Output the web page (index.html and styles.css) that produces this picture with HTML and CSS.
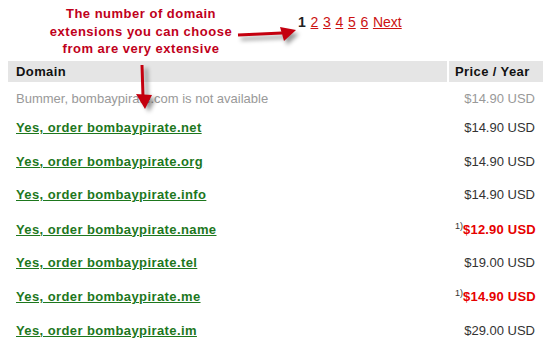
FILE: index.html
```html
<!DOCTYPE html>
<html lang="en">
<head>
    <meta charset="UTF-8">
    <title>Domain Search Results</title>
    <link rel="stylesheet" href="styles.css">
</head>
<body>
    <div class="page">
        <div class="top">
            <p class="callout">The number of domain<br>extensions you can choose<br>from are very extensive</p>
            <div class="pager">
                <span class="current">1</span>
                <a href="#">2</a>
                <a href="#">3</a>
                <a href="#">4</a>
                <a href="#">5</a>
                <a href="#">6</a>
                <a href="#">Next</a>
            </div>
        </div>

        <table class="domains">
            <thead>
                <tr>
                    <th class="name">Domain</th>
                    <th class="price">Price / Year</th>
                </tr>
            </thead>
            <tbody>
                <tr class="taken">
                    <td class="name">Bummer, bombaypirate.com is not available</td>
                    <td class="price">$14.90 USD</td>
                </tr>
                <tr>
                    <td class="name"><a href="#">Yes, order bombaypirate.net</a></td>
                    <td class="price">$14.90 USD</td>
                </tr>
                <tr>
                    <td class="name"><a href="#">Yes, order bombaypirate.org</a></td>
                    <td class="price">$14.90 USD</td>
                </tr>
                <tr>
                    <td class="name"><a href="#">Yes, order bombaypirate.info</a></td>
                    <td class="price">$14.90 USD</td>
                </tr>
                <tr class="has-note">
                    <td class="name"><a href="#">Yes, order bombaypirate.name</a></td>
                    <td class="price"><sup>1)</sup><span class="promo">$12.90 USD</span></td>
                </tr>
                <tr>
                    <td class="name"><a href="#">Yes, order bombaypirate.tel</a></td>
                    <td class="price">$19.00 USD</td>
                </tr>
                <tr class="has-note">
                    <td class="name"><a href="#">Yes, order bombaypirate.me</a></td>
                    <td class="price"><sup>1)</sup><span class="promo">$14.90 USD</span></td>
                </tr>
                <tr>
                    <td class="name"><a href="#">Yes, order bombaypirate.im</a></td>
                    <td class="price">$29.00 USD</td>
                </tr>
            </tbody>
        </table>

        <!-- annotation arrows drawn over the page -->
        <svg class="arrows" width="550" height="341" viewBox="0 0 550 341">
            <g class="arrow arrow-right">
                <path d="M238 35 L282 33" />
                <polygon points="280,27 296,30 284,41" />
            </g>
            <g class="arrow arrow-down">
                <path d="M142 65 L143 96" />
                <polygon points="136,94 152,95 145,109" />
            </g>
        </svg>
    </div>
</body>
</html>
```

FILE: styles.css
```css
body {
    margin: 0;
    padding: 0;
    background: #ffffff;
    font-family: "Liberation Sans", Arial, sans-serif;
    color: #333;
}

.page {
    position: relative;
    width: 550px;
    height: 341px;
    overflow: hidden;
}

.top {
    display: flex;
    height: 61px;
}

.callout {
    width: 282px;
    margin: 0;
    padding-top: 5px;
    text-align: center;
    font-size: 13px;
    font-weight: bold;
    line-height: 17.5px;
    letter-spacing: 0.5px;
    color: #c0001b;
}

.pager {
    display: flex;
    gap: 4.7px;
    margin-left: 16px;
    padding-top: 14px;
    font-size: 14px;
    line-height: 16px;
}

.pager .current {
    font-weight: bold;
    color: #222;
}

.pager a {
    color: #cc1111;
    text-decoration: underline;
}

.domains {
    margin-left: 8px;
    width: 535px;
    table-layout: fixed;
    border-collapse: separate;
    border-spacing: 0;
    font-size: 13px;
    line-height: 15px;
}

.domains th,
.domains td {
    box-sizing: border-box;
    white-space: nowrap;
}

.domains th {
    background: #e5e5e5;
    color: #111;
    text-align: left;
    font-weight: bold;
    letter-spacing: 0.4px;
    padding: 3px 8px 3px 8px;
}

.domains th.price {
    width: 96px;
    border-left: 2px solid #ffffff;
    padding-left: 6px;
}

.domains td {
    padding: 9.25px 8px;
}

.domains tr.has-note td {
    padding-top: 10px;
}

.domains td.price {
    text-align: right;
    color: #333;
}

.domains tr.taken td {
    color: #999;
    padding-top: 9px;
    padding-bottom: 5px;
}

.domains td a {
    color: #1d771d;
    font-weight: bold;
    letter-spacing: 0.4px;
    text-decoration: underline;
}

.domains sup {
    font-size: 9px;
    line-height: 0;
    vertical-align: 5px;
    color: #333;
}

.promo {
    color: #e60000;
    font-weight: bold;
    letter-spacing: 0.2px;
}

.arrows {
    position: absolute;
    top: 0;
    left: 0;
    pointer-events: none;
}

.arrow path {
    stroke: #c4000f;
    stroke-width: 3;
    fill: none;
}

.arrow polygon {
    fill: #c4000f;
}

.arrow-right {
    filter: drop-shadow(3px 4px 2px rgba(0, 0, 0, 0.4));
}

.arrow-down {
    filter: drop-shadow(4px 3px 2px rgba(0, 0, 0, 0.4));
}
```
